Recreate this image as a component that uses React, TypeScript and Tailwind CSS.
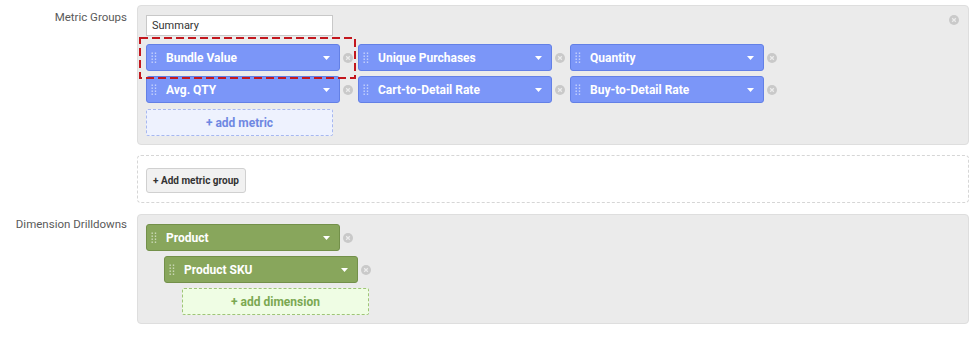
import React from 'react';

type Color = 'blue' | 'green';

const chipStyles: Record<Color, string> = {
  blue: 'bg-[#7b96f8] border-[#6380e6]',
  green: 'bg-[#88a65c] border-[#73904a]',
};

function RemoveIcon() {
  return (
    <svg width="10" height="10" viewBox="0 0 11 11" className="shrink-0">
      <circle cx="5.5" cy="5.5" r="5.5" fill="#c9c9c9" />
      <path d="M3.5 3.5 L7.5 7.5 M7.5 3.5 L3.5 7.5" stroke="#ececec" strokeWidth="1.4" />
    </svg>
  );
}

function Handle() {
  return (
    <svg width="6" height="12" viewBox="0 0 6 12" className="shrink-0 opacity-60">
      {[0, 1, 2, 3].map(r => (
        <g key={r}>
          <rect x="0.5" y={r * 3 + 0.5} width="1.4" height="1.4" fill="#fff" />
          <rect x="3.8" y={r * 3 + 0.5} width="1.4" height="1.4" fill="#fff" />
        </g>
      ))}
    </svg>
  );
}

function Chip({ label, color }: { label: string; color: Color }) {
  return (
    <div className="flex items-center">
      <div
        className={`flex items-center w-[194px] h-[27px] border rounded-[3px] pl-[4px] pr-[9px] ${chipStyles[color]}`}
      >
        <Handle />
        <span className="ml-[9px] flex-1 text-[12px] font-bold text-white leading-none">{label}</span>
        <svg width="7" height="4" viewBox="0 0 7 4">
          <path d="M0 0 L7 0 L3.5 4 Z" fill="#fff" />
        </svg>
      </div>
      <div className="ml-[3px] mr-[5px]">
        <RemoveIcon />
      </div>
    </div>
  );
}

export default function App() {
  return (
    <div
      className="w-[975px] h-[337px] bg-white pt-[5px] text-[#555]"
      style={{ fontFamily: 'Roboto, "Liberation Sans", sans-serif' }}
    >
      {/* Metric groups */}
      <div className="flex">
        <div className="w-[127px] text-right text-[11.5px] pt-[4px] text-[#5a5a5a]">Metric Groups</div>
        <div className="relative ml-[10px] w-[832px] h-[140px] bg-[#ebebeb] border border-[#dedede] rounded-[4px] pl-[8px] pt-[9px]">
          <div className="absolute right-[9px] top-[9px]">
            <RemoveIcon />
          </div>
          <div className="w-[187px] h-[21px] bg-white border border-[#c8c8c8] text-[11px] text-[#333] px-[5px] leading-[19px]">
            Summary
          </div>
          <div className="mt-[8px] flex flex-col gap-[5px]">
            <div className="flex">
              <Chip label="Bundle Value" color="blue" />
              <Chip label="Unique Purchases" color="blue" />
              <Chip label="Quantity" color="blue" />
            </div>
            <div className="flex">
              <Chip label="Avg. QTY" color="blue" />
              <Chip label="Cart-to-Detail Rate" color="blue" />
              <Chip label="Buy-to-Detail Rate" color="blue" />
            </div>
          </div>
          <div className="mt-[6px] w-[187px] h-[27px] flex items-center justify-center bg-[#eef2fe] border border-dashed border-[#a7b8f0] rounded-[2px] text-[12px] font-bold text-[#6f88e2]">
            + add metric
          </div>
          {/* selection highlight */}
          <svg className="absolute left-[1px] top-[31px]" width="217" height="42">
            <rect x="1" y="1" width="215" height="40" fill="none" stroke="#c3171e" strokeWidth="2" strokeDasharray="8 4" />
          </svg>
        </div>
      </div>

      {/* Add metric group */}
      <div className="flex mt-[10px]">
        <div className="w-[127px]" />
        <div className="ml-[10px] w-[832px] h-[48px] border border-dashed border-[#d6d6d6] rounded-[4px] pl-[8px] pt-[11px]">
          <div className="inline-flex items-center h-[25px] px-[6px] bg-[#f1f1f1] border border-[#d0d0d0] rounded-[3px] text-[10px] font-bold text-[#333]">
            + Add metric group
          </div>
        </div>
      </div>

      {/* Dimension drilldowns */}
      <div className="flex mt-[11px]">
        <div className="w-[127px] text-right text-[11.5px] pt-[2px] text-[#5a5a5a]">Dimension Drilldowns</div>
        <div className="ml-[10px] w-[832px] h-[110px] bg-[#ebebeb] border border-[#dedede] rounded-[4px] pl-[8px] pt-[9px] flex flex-col gap-[5px]">
          <Chip label="Product" color="green" />
          <div className="ml-[18px]">
            <Chip label="Product SKU" color="green" />
          </div>
          <div className="ml-[36px] w-[187px] h-[27px] flex items-center justify-center bg-[#effde4] border border-dashed border-[#9fc577] rounded-[2px] text-[12px] font-bold text-[#7ba851]">
            + add dimension
          </div>
        </div>
      </div>
    </div>
  );
}
